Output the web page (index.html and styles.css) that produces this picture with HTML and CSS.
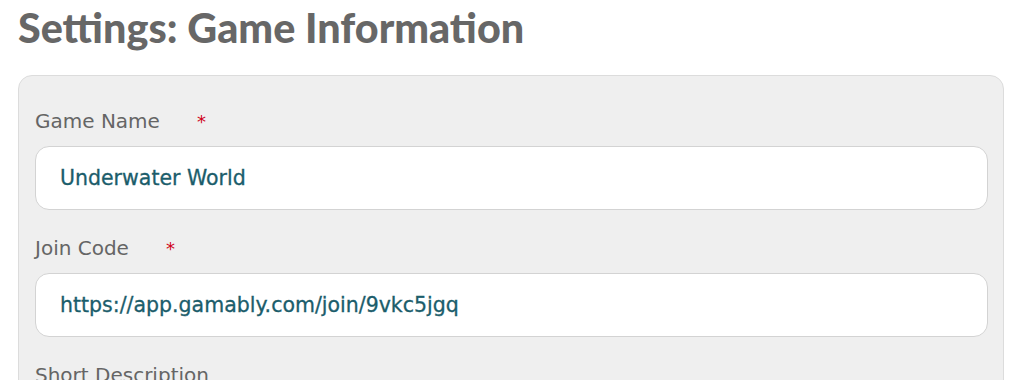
FILE: index.html
```html
<!DOCTYPE html>
<html>
<head>
    <meta charset="UTF-8">
    <title>Settings: Game Information</title>
    <link rel="stylesheet" href="styles.css">
</head>
<body>
<div class="page">
    <h1 class="title">Settings: Game Information</h1>
    <div class="panel">
        <div class="field">
            <label class="label">Game Name<span class="req">*</span></label>
            <div class="input">Underwater World</div>
        </div>
        <div class="field">
            <label class="label">Join Code<span class="req">*</span></label>
            <div class="input">https://app.gamably.com/join/9vkc5jgq</div>
        </div>
        <div class="field">
            <label class="label">Short Description</label>
            <div class="input"></div>
        </div>
    </div>
</div>
</body>
</html>
```

FILE: styles.css
```css
* {
    margin: 0;
    padding: 0;
    box-sizing: border-box;
}

body {
    font-family: "DejaVu Sans", "Noto Sans", sans-serif;
    background-color: #fff;
}

.page {
    padding: 0 20px 0 18px;
}

.title {
    font-family: "Lato", "Noto Sans", sans-serif;
    font-size: 41.3px;
    font-weight: 900;
    color: #676767;
    line-height: 54px;
    height: 75px;
}

.panel {
    background-color: #efefef;
    border: 1px solid #dcdcdc;
    border-radius: 14px;
    padding: 33px 15px 0 16px;
}

.field {
    margin-bottom: 26px;
}

.label {
    display: block;
    font-size: 20px;
    color: #656565;
    line-height: 24px;
    height: 37px;
}

.req {
    color: #d0021b;
    font-size: 18px;
    margin-left: 37px;
}

.input {
    height: 64px;
    background-color: #fff;
    border: 1px solid #d3d3d3;
    border-radius: 14px;
    padding: 0 24px;
    font-size: 20.5px;
    color: #1b5d6b;
    line-height: 62px;
    -webkit-text-stroke: 0.3px #1b5d6b;
}
```
